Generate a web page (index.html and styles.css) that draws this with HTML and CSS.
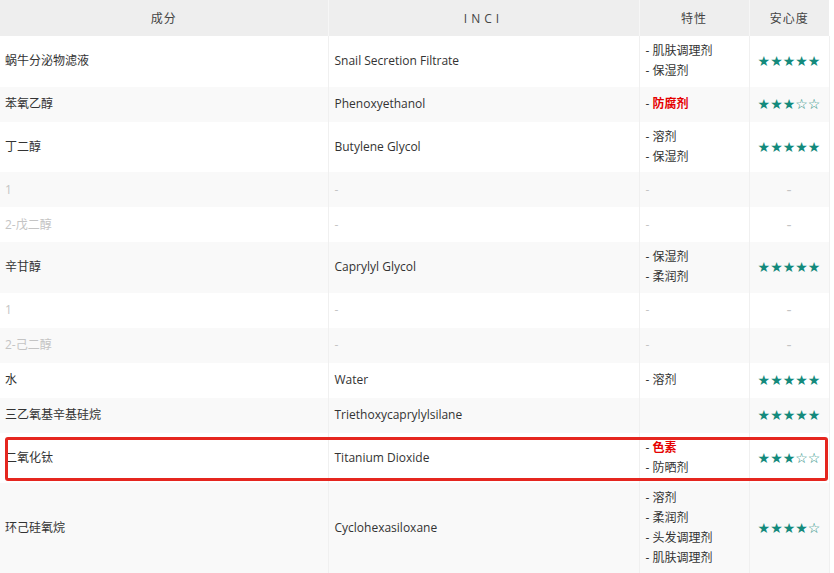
FILE: index.html
```html
<!DOCTYPE html>
<html lang="zh">
<head>
<meta charset="utf-8">
<title>成分表</title>
<link rel="stylesheet" href="styles.css">
</head>
<body>
<div class="wrap">
<table class="ing">
  <colgroup>
    <col class="c1"><col class="c2"><col class="c3"><col class="c4">
  </colgroup>
  <thead>
    <tr><th>成分</th><th class="inci">INCI</th><th>特性</th><th>安心度</th></tr>
  </thead>
  <tbody>
    <tr><td>蜗牛分泌物滤液</td><td>Snail Secretion Filtrate</td><td><ul class="feat"><li>- 肌肤调理剂</li><li>- 保湿剂</li></ul></td><td class="rate"><span class="on">★★★★★</span></td></tr>
    <tr><td>苯氧乙醇</td><td>Phenoxyethanol</td><td><ul class="feat"><li>- <b class="warn">防腐剂</b></li></ul></td><td class="rate"><span class="on">★★★</span><span class="off">☆☆</span></td></tr>
    <tr><td>丁二醇</td><td>Butylene Glycol</td><td><ul class="feat"><li>- 溶剂</li><li>- 保湿剂</li></ul></td><td class="rate"><span class="on">★★★★★</span></td></tr>
    <tr class="muted"><td>1</td><td>-</td><td>-</td><td class="rate">-</td></tr>
    <tr class="muted"><td>2-戊二醇</td><td>-</td><td>-</td><td class="rate">-</td></tr>
    <tr><td>辛甘醇</td><td>Caprylyl Glycol</td><td><ul class="feat"><li>- 保湿剂</li><li>- 柔润剂</li></ul></td><td class="rate"><span class="on">★★★★★</span></td></tr>
    <tr class="muted"><td>1</td><td>-</td><td>-</td><td class="rate">-</td></tr>
    <tr class="muted"><td>2-己二醇</td><td>-</td><td>-</td><td class="rate">-</td></tr>
    <tr><td>水</td><td>Water</td><td><ul class="feat"><li>- 溶剂</li></ul></td><td class="rate"><span class="on">★★★★★</span></td></tr>
    <tr><td>三乙氧基辛基硅烷</td><td>Triethoxycaprylylsilane</td><td></td><td class="rate"><span class="on">★★★★★</span></td></tr>
    <tr class="hl"><td>二氧化钛</td><td>Titanium Dioxide</td><td><ul class="feat"><li>- <b class="warn">色素</b></li><li>- 防晒剂</li></ul></td><td class="rate"><span class="on">★★★</span><span class="off">☆☆</span></td></tr>
    <tr><td>环己硅氧烷</td><td>Cyclohexasiloxane</td><td><ul class="feat"><li>- 溶剂</li><li>- 柔润剂</li><li>- 头发调理剂</li><li>- 肌肤调理剂</li></ul></td><td class="rate"><span class="on">★★★★</span><span class="off">☆</span></td></tr>
  </tbody>
</table>
<div class="mark" aria-hidden="true"></div>
</div>
</body>
</html>
```
FILE: styles.css
```css
html, body {
  margin: 0;
  padding: 0;
  background: #fff;
}
body {
  font-family: "Open Sans", "Noto Sans CJK SC", sans-serif;
  font-size: 12px;
  color: #333;
}
.wrap {
  position: relative;
  width: 829px;
}
.ing {
  width: 829px;
  border-collapse: collapse;
  table-layout: fixed;
}
.c1 { width: 328px; }
.c2 { width: 311px; }
.c3 { width: 110px; }
.c4 { width: 80px; }

.ing th {
  height: 36px;
  padding: 0;
  background: #eeeeee;
  color: #444;
  font-weight: normal;
  text-align: center;
  border-left: 1px solid #f6f6f6;
  letter-spacing: 1px;
}
.ing th.inci { letter-spacing: 4px; }
.ing th:first-child { border-left: none; }

.ing td {
  height: 24.5px;
  padding: 5.25px 6px;
  vertical-align: middle;
  border-left: 1px solid #f0f0f0;
  border-right: 1px solid #f0f0f0;
  line-height: 20px;
}
.ing td:first-child { border-left: none; padding-left: 5px; }
.ing tbody tr:nth-child(even) td { background: #f9f9f9; }

.feat {
  list-style: none;
  margin: 0;
  padding: 0;
}
.feat li { line-height: 20px; }
.warn { color: #e50000; font-weight: bold; }

.rate {
  text-align: center;
  color: #bbb;
  font-family: "DejaVu Sans", sans-serif;
  font-size: 14px;
}
.rate .on, .rate .off { color: #148a7c; }

.muted td { color: #c4c4c4; }

.mark {
  position: absolute;
  left: 5px;
  top: 437px;
  width: 817px;
  height: 38px;
  border: 3px solid #e5261f;
  border-radius: 3px;
  pointer-events: none;
}
```
